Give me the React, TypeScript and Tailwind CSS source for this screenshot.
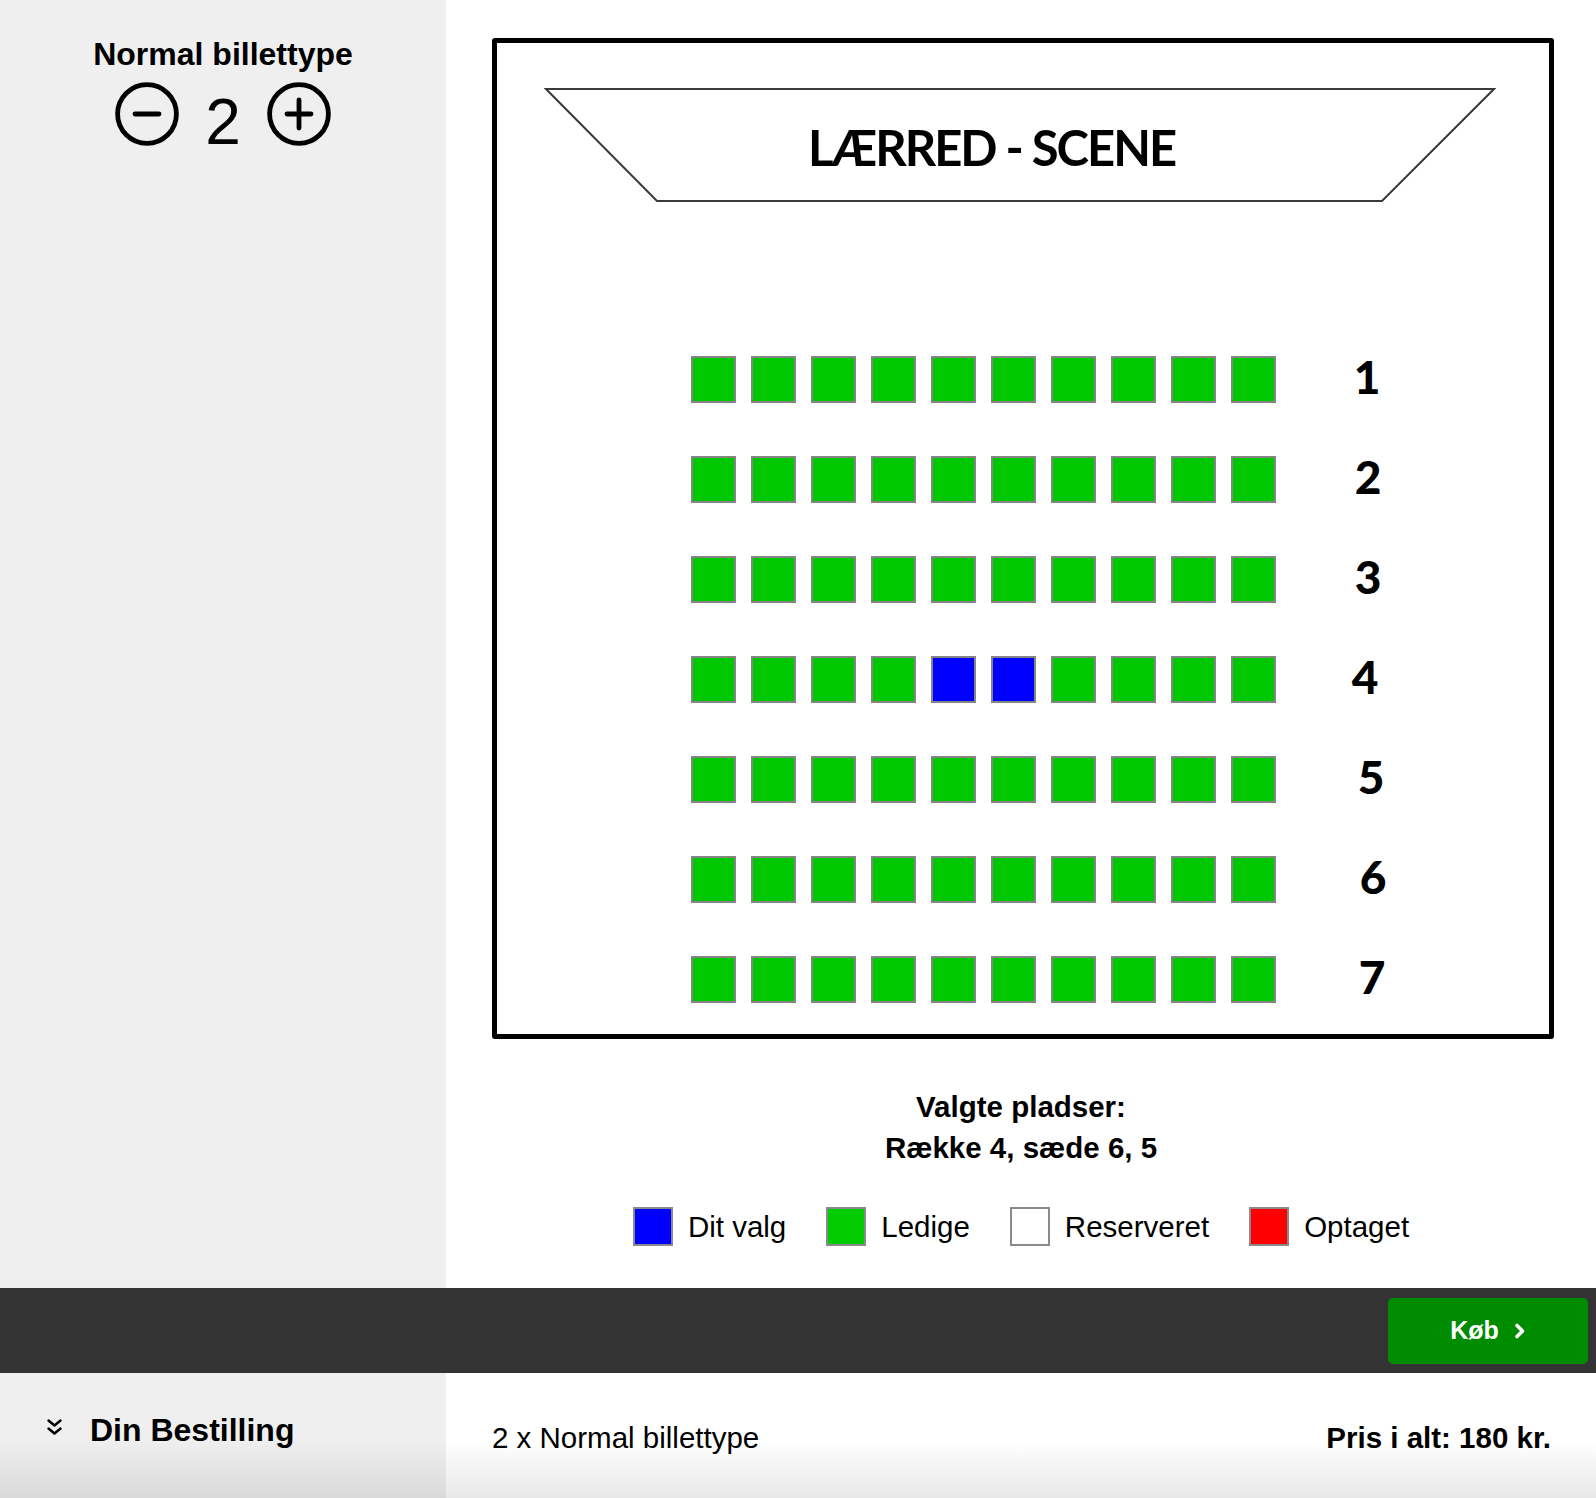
import React from 'react';

const ROWS = [1, 2, 3, 4, 5, 6, 7];
const SEATS = [1, 2, 3, 4, 5, 6, 7, 8, 9, 10];
const selected = { row: 4, seats: [5, 6] };
// row labels in the source image are not perfectly aligned
const LABEL_SHIFT = [
  'translate-x-[2px]',
  'translate-x-[3px]',
  'translate-x-[3px]',
  'translate-x-0',
  'translate-x-[6px]',
  'translate-x-[8px]',
  'translate-x-[7px]',
];

const CircleIcon = ({ plus }: { plus?: boolean }) => (
  <svg width="64" height="64" viewBox="0 0 64 64" fill="none" stroke="#000" strokeWidth="4.8" strokeLinecap="round">
    <circle cx="32" cy="32" r="29.4" />
    <line x1="20" y1="32" x2="44" y2="32" />
    {plus && <line x1="32" y1="18" x2="32" y2="46" />}
  </svg>
);

const Seat = ({ picked }: { picked: boolean }) => (
  <div
    className={`w-[45px] h-[47px] border-2 border-[#858585] ${picked ? 'bg-[#0000ff]' : 'bg-[#00c800]'}`}
  />
);

const LegendItem = ({ color, label }: { color: string; label: string }) => (
  <div className="flex items-center gap-[15px]">
    <div className={`w-[40px] h-[39px] border-2 border-[#8a8a8a] ${color}`} />
    <span className="text-[29.5px] leading-[36px]">{label}</span>
  </div>
);

export default function App() {
  return (
    <div className="w-full font-['Liberation_Sans',Arial,sans-serif] text-black">
      {/* top: ticket picker + seat map */}
      <div className="flex">
        <aside className="w-[446px] shrink-0 bg-[#efefef] pt-[38px]">
          <h2 className="text-center text-[32px] leading-[32px] font-bold">Normal billettype</h2>
          <div className="mt-[12px] flex items-start justify-center gap-[26px]">
            <CircleIcon />
            <span className="mt-[8px] text-[64px] leading-none">2</span>
            <CircleIcon plus />
          </div>
        </aside>

        <main className="flex-1 bg-white pt-[38px] pb-[42px]">
          <div className="ml-[46px] w-[1062px] border-[5px] border-black rounded-[3px] pb-[31px] font-['Lato',sans-serif]">
            <div className="relative ml-[47px] mt-[45px] w-[952px] h-[114px]">
              <svg className="absolute inset-0" width="952" height="114" viewBox="0 0 952 114" fill="none">
                <polygon points="2,1 950,1 838,113 113,113" stroke="#3a3a3a" strokeWidth="2" />
              </svg>
              <div className="relative pl-[264px] pt-[35px] text-[49px] leading-none font-bold tracking-[-2px]">
                LÆRRED - SCENE
              </div>
            </div>

            <div className="mt-[154px] ml-[194px] flex flex-col gap-[53px]">
              {ROWS.map((row, i) => (
                <div key={row} className="flex items-center">
                  <div className="flex gap-[15px]">
                    {SEATS.map(seat => (
                      <Seat
                        key={seat}
                        picked={row === selected.row && selected.seats.includes(seat)}
                      />
                    ))}
                  </div>
                  <span
                    className={`ml-[64px] w-[50px] -mt-[6px] text-center text-[46px] leading-none font-black ${LABEL_SHIFT[i]}`}
                  >
                    {row}
                  </span>
                </div>
              ))}
            </div>
          </div>

          <div className="mt-[47px] text-center text-[29.5px] leading-[41px] font-bold">
            <div>Valgte pladser:</div>
            <div>Række 4, sæde 6, 5</div>
          </div>

          <div className="mt-[39px] flex justify-center gap-[40px]">
            <LegendItem color="bg-[#0000ff]" label="Dit valg" />
            <LegendItem color="bg-[#00cc00]" label="Ledige" />
            <LegendItem color="bg-white" label="Reserveret" />
            <LegendItem color="bg-[#ff0000]" label="Optaget" />
          </div>
        </main>
      </div>

      {/* action bar */}
      <div className="h-[85px] bg-[#333333] flex items-center justify-end pr-[8px]">
        <button className="w-[200px] h-[66px] rounded-[5px] bg-[#008c00] flex items-center justify-center gap-[15px] text-white text-[25px] font-bold">
          Køb
          <svg width="12" height="16" viewBox="0 0 12 16" fill="none" stroke="#fff" strokeWidth="3.6" strokeLinecap="round" strokeLinejoin="round">
            <path d="M3 2.5 L8.5 8 L3 13.5" />
          </svg>
        </button>
      </div>

      {/* order summary */}
      <div className="relative flex h-[125px]">
        <div className="w-[446px] shrink-0 bg-[#efefef] pt-[39px] pl-[46px]">
          <div className="flex items-center gap-[27px]">
            <svg className="-mt-[7px]" width="17" height="18" viewBox="0 0 17 18" fill="none" stroke="#000" strokeWidth="2.4" strokeLinecap="round" strokeLinejoin="round">
              <path d="M2.5 2.5 L8.5 7.5 L14.5 2.5" />
              <path d="M2.5 10.5 L8.5 15.5 L14.5 10.5" />
            </svg>
            <span className="text-[32px] leading-[36px] font-bold">Din Bestilling</span>
          </div>
        </div>
        <div className="flex-1 bg-white pt-[47px] pl-[46px] pr-[45px] flex justify-between text-[29.5px] leading-[36px]">
          <span>2 x Normal billettype</span>
          <span className="font-bold">Pris i alt: 180 kr.</span>
        </div>
        <div className="pointer-events-none absolute inset-x-0 bottom-0 h-[58px] bg-gradient-to-b from-transparent to-black/[0.09]" />
      </div>
    </div>
  );
}
